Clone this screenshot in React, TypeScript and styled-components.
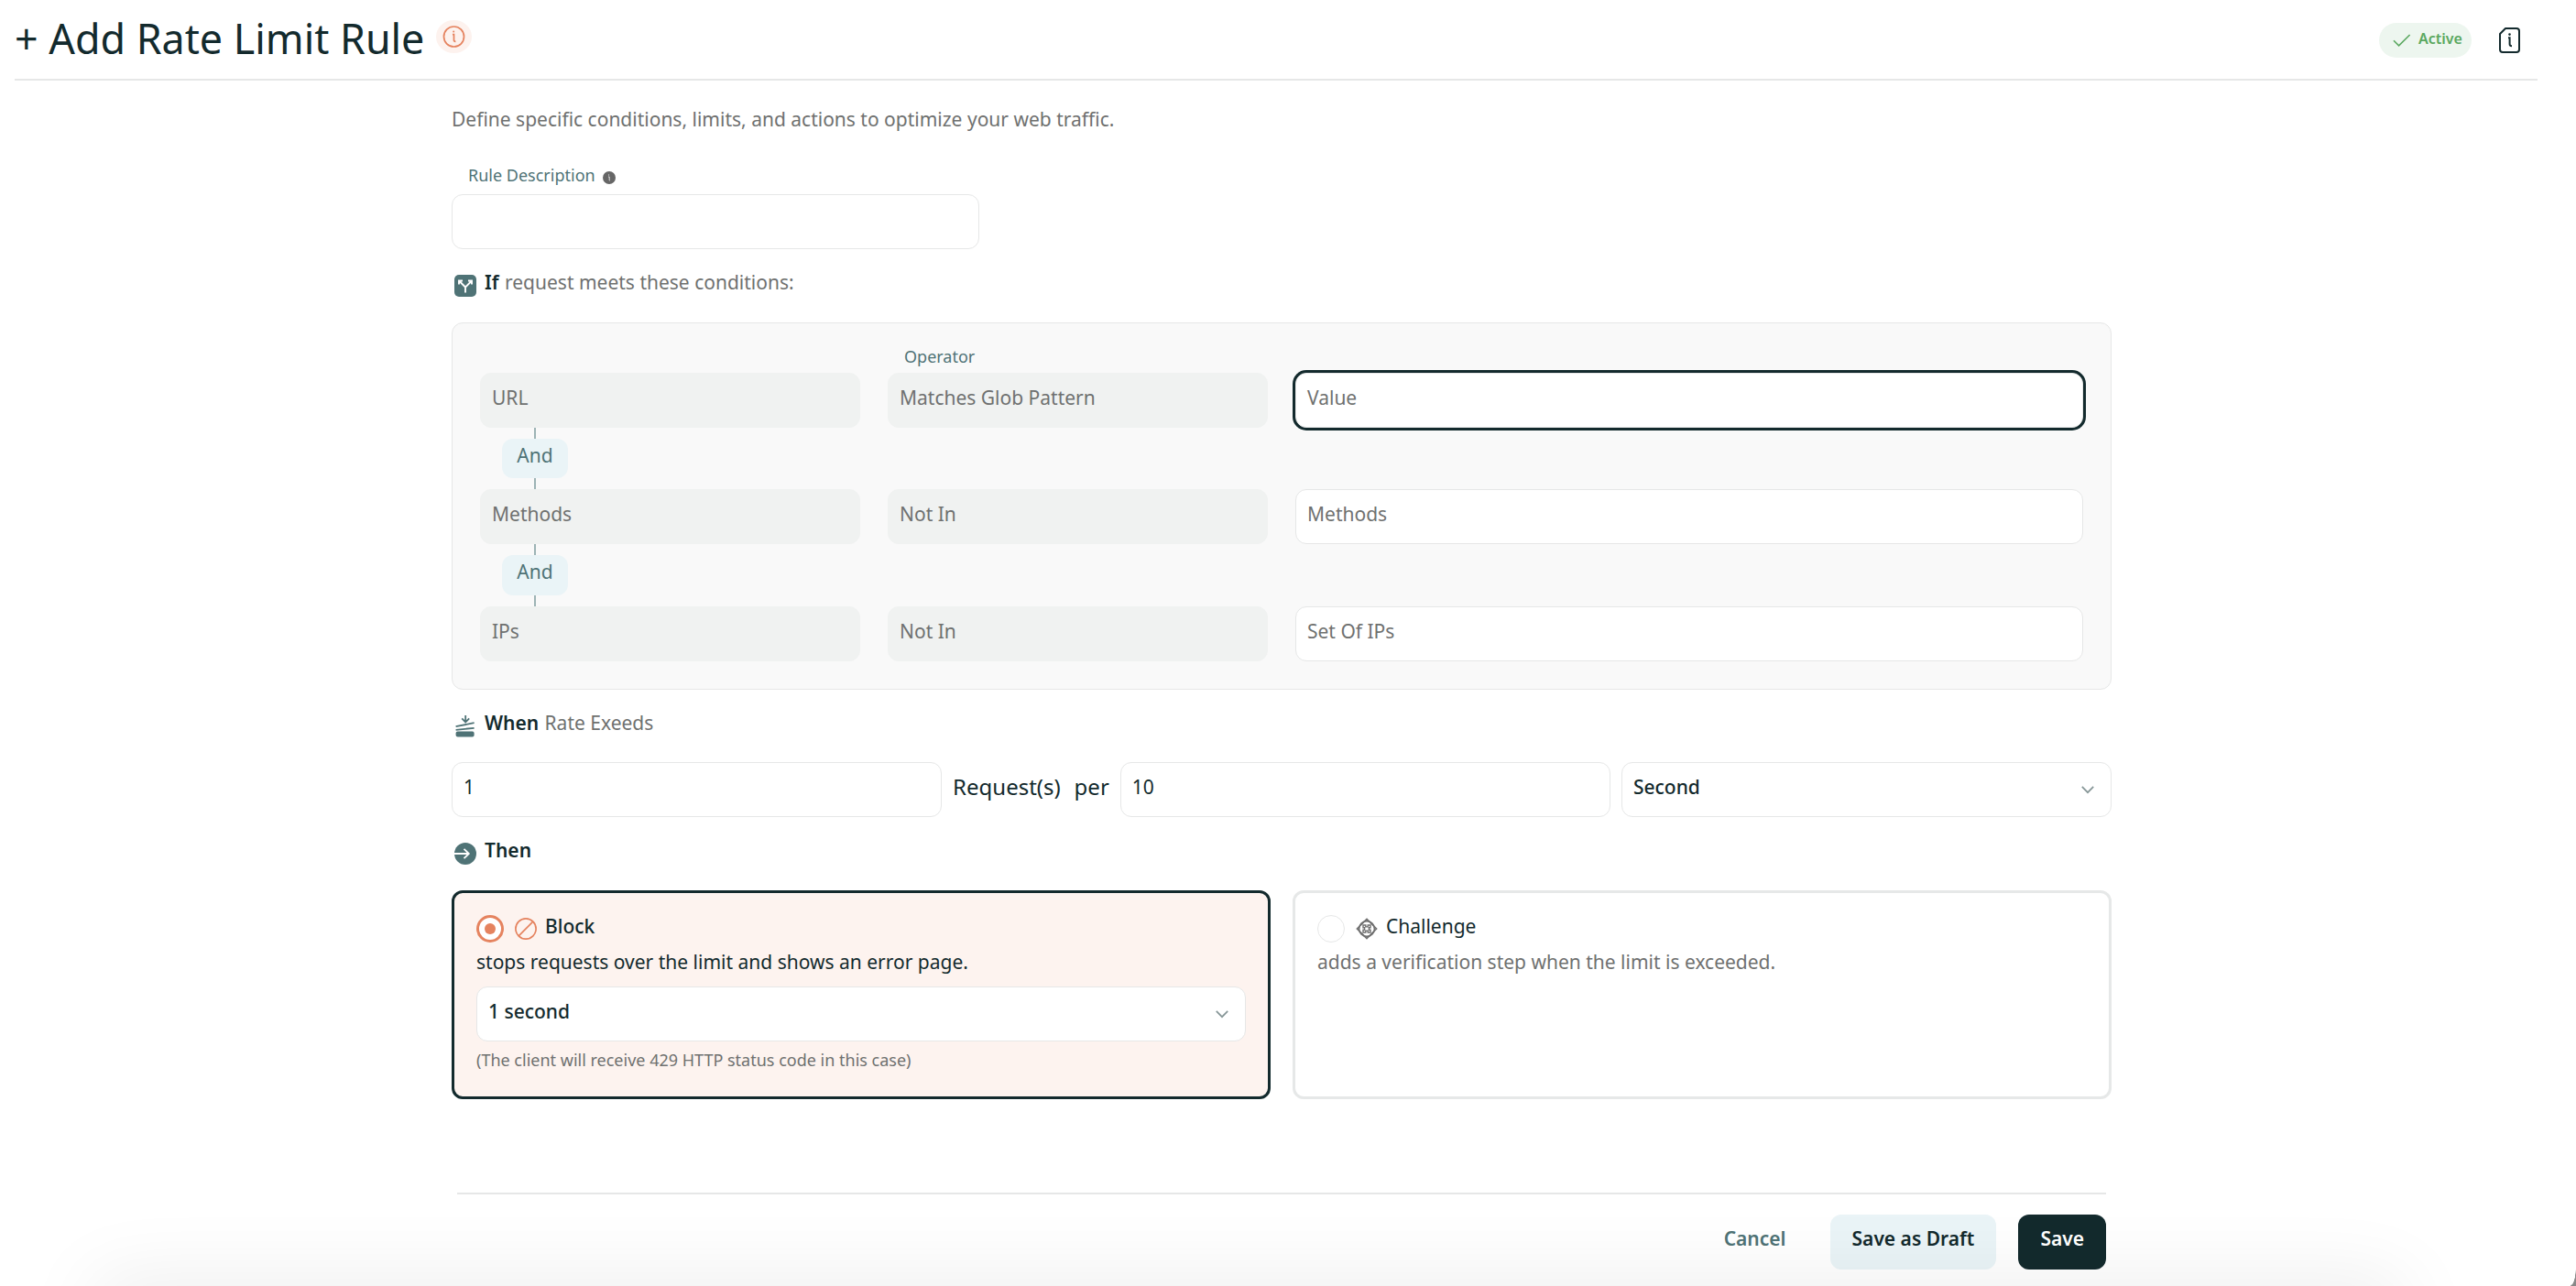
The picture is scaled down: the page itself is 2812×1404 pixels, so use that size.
import React from "react";
import styled, { createGlobalStyle, css } from "styled-components";

const dark = "#132a2d";
const teal = "#4f7376";
const grey = "#6f7170";
const line = "#e6e7e7";
const orange = "#e5835f";

const InfoGlyph: React.FC<{ color: string }> = ({ color }) => (
  <svg width="25" height="24" viewBox="0 0 25 24" fill="none" stroke={color} strokeWidth="1.7">
    <circle cx="12.5" cy="12" r="11" />
    <path d="M11 9.6h1.5v6.4c0 .9.5 1.3 1.9 1.3" />
    <circle cx="12.2" cy="6.4" r="1" fill={color} stroke="none" />
  </svg>
);

const CheckGlyph = () => (
  <svg width="20" height="16" viewBox="0 0 20 16" fill="none" stroke="#5aa860" strokeWidth="1.6">
    <path d="M1 8.2L6.6 13.8L18.6 2" />
  </svg>
);

const DocGlyph = () => (
  <svg width="24" height="30" viewBox="0 0 24 30" fill="none" stroke={dark} strokeWidth="2">
    <path d="M8 2H20a3 3 0 0 1 3 3V25a3 3 0 0 1-3 3H5a3 3 0 0 1-3-3V8z" strokeLinejoin="round" />
    <path d="M11 12.2h1.6v7c0 1.6.7 2 2.4 2" />
    <circle cx="12.5" cy="8.6" r="1.3" fill={dark} stroke="none" />
  </svg>
);

const HintGlyph = () => (
  <svg width="14" height="14" viewBox="0 0 14 14">
    <circle cx="7" cy="7" r="7" fill="#666" />
    <path d="M6 6h1.2v3.6q0 .6.8.6M6.6 3.4v1.2" fill="none" stroke="#ddd" strokeWidth="1" />
  </svg>
);

const SplitGlyph = () => (
  <svg width="24" height="24" viewBox="0 0 24 24">
    <rect width="24" height="24" rx="5" fill={teal} />
    <path
      d="M12 19.5V13.5L5.5 7M12 13.5L18.5 7M5 10.5V6.5H9M15 6.5H19V10.5"
      fill="none"
      stroke="#fff"
      strokeWidth="1.9"
    />
  </svg>
);

const RateGlyph = () => (
  <svg width="24" height="24" viewBox="0 0 24 24" fill="none" stroke={teal} strokeWidth="1.8">
    <path d="M12.2 0V7M8.2 3.4L12.2 7.4L16.2 3.4" />
    <path d="M1.6 12.2L21.6 8.2M1.6 15.8L21.6 13.8" />
    <rect x="1.6" y="17.6" width="20" height="6" rx="2" fill={teal} stroke="none" />
  </svg>
);

const ArrowGlyph = () => (
  <svg width="24" height="24" viewBox="0 0 24 24">
    <circle cx="12" cy="12" r="12" fill={teal} />
    <path d="M0 12H16M10.5 6.8L15.8 12L10.5 17.2" fill="none" stroke="#fff" strokeWidth="1.8" />
  </svg>
);

const BlockGlyph = () => (
  <svg width="24" height="24" viewBox="0 0 24 24" fill="none" stroke={orange} strokeWidth="1.7">
    <circle cx="12" cy="12" r="11.1" />
    <path d="M4.2 19.8L19.8 4.2" />
  </svg>
);

const ChallengeGlyph = () => (
  <svg width="24" height="24" viewBox="0 0 24 24" fill="none" stroke="#6f6f6f" strokeWidth="1.6">
    <path d="M12 1.4L22.6 12L12 22.6L1.4 12z" />
    <circle cx="12" cy="12" r="8.4" />
    <path d="M8 8h2.8v1.9h2.4V8H16v2.8h-1.6v2.4H16V16h-2.8v-1.9h-2.4V16H8v-2.8h1.6v-2.4H8z" strokeWidth="1.4" />
  </svg>
);

const Chevron = () => (
  <svg width="14" height="9" viewBox="0 0 14 9" fill="none" stroke="#869697" strokeWidth="1.7">
    <path d="M0.8 0.8L7 7.2L13.2 0.8" />
  </svg>
);

const conditions = [
  { name: "URL", operator: "Matches Glob Pattern", value: "Value", focused: true },
  { name: "Methods", operator: "Not In", value: "Methods", focused: false },
  { name: "IPs", operator: "Not In", value: "Set Of IPs", focused: false },
];

const App: React.FC = () => (
  <>
    <GlobalStyle />
    <Page>
      <Header>
        <Title>+ Add Rate Limit Rule</Title>
        <TitleInfo>
          <InfoGlyph color={orange} />
        </TitleInfo>
        <Status>
          <CheckGlyph />
          <span>Active</span>
        </Status>
        <DocGlyph />
      </Header>

      <Content>
        <Intro>Define specific conditions, limits, and actions to optimize your web traffic.</Intro>
        <DescriptionLabel>
          Rule Description
          <HintGlyph />
        </DescriptionLabel>
        <DescriptionField />

        <Heading>
          <SplitGlyph />
          <p>
            <b>If</b> request meets these conditions:
          </p>
        </Heading>
        <Panel>
          <OperatorLabel>Operator</OperatorLabel>
          {conditions.map((c, i) => (
            <React.Fragment key={c.name}>
              {i > 0 && (
                <Connector>
                  <Stem />
                  <AndTag>And</AndTag>
                  <Stem />
                </Connector>
              )}
              <ConditionRow>
                <Field $disabled>{c.name}</Field>
                <Field $disabled>{c.operator}</Field>
                <Field $span={2} $focused={c.focused}>
                  {c.value}
                </Field>
              </ConditionRow>
            </React.Fragment>
          ))}
        </Panel>

        <Heading $bottom={26}>
          <RateGlyph />
          <p>
            <b>When</b> Rate Exeeds
          </p>
        </Heading>
        <RateRow>
          <Field $filled>1</Field>
          <RateText>Request(s)&nbsp; per</RateText>
          <Field $filled>10</Field>
          <Field $filled $medium>
            Second
            <Chevron />
          </Field>
        </RateRow>

        <Heading>
          <ArrowGlyph />
          <p>
            <b>Then</b>
          </p>
        </Heading>
        <Cards>
          <Card $selected>
            <Option>
              <Radio $selected />
              <BlockGlyph />
              <OptionName $selected>Block</OptionName>
            </Option>
            <OptionText $selected>stops requests over the limit and shows an error page.</OptionText>
            <Field $filled $medium>
              1 second
              <Chevron />
            </Field>
            <Note>(The client will receive 429 HTTP status code in this case)</Note>
          </Card>
          <Card>
            <Option>
              <Radio />
              <ChallengeGlyph />
              <OptionName>Challenge</OptionName>
            </Option>
            <OptionText>adds a verification step when the limit is exceeded.</OptionText>
          </Card>
        </Cards>

        <Footer>
          <Button $kind="text">Cancel</Button>
          <Button $kind="light">Save as Draft</Button>
          <Button $kind="dark">Save</Button>
        </Footer>
      </Content>
      <BottomShade />
      <Corner />
    </Page>
  </>
);

export default App;

const GlobalStyle = createGlobalStyle`
  * {
    box-sizing: border-box;
  }
  body {
    margin: 0;
    background: #fff;
    overflow: hidden;
  }
  p {
    margin: 0;
  }
  svg {
    flex: none;
    display: block;
  }
`;

const Page = styled.div`
  position: relative;
  width: 2812px;
  height: 1404px;
  overflow: hidden;
  color: ${dark};
  font-family: "Noto Sans", sans-serif;
  font-size: 21px;
  line-height: 30px;
`;

const Header = styled.header`
  display: flex;
  align-items: center;
  height: 88px;
  margin: 0 42px 0 16px;
  padding: 2px 19px 0 0;
  border-bottom: 2px solid ${line};
`;

const Title = styled.h1`
  margin: 0;
  padding-bottom: 4px;
  font-size: 44.8px;
  font-weight: 400;
  line-height: 60px;
  white-space: nowrap;
`;

const TitleInfo = styled.span`
  display: flex;
  align-items: center;
  justify-content: center;
  width: 39px;
  height: 36px;
  margin: 0 auto 8px 13px;
  border-radius: 50%;
  background: #fdf2ee;
`;

const Status = styled.div`
  display: flex;
  align-items: center;
  gap: 8px;
  width: 101px;
  height: 38px;
  margin-right: 29px;
  padding-left: 15px;
  border-radius: 19px;
  background: #edf6ef;
  color: #5aa860;
  font-size: 16px;
  font-weight: 600;

  span {
    padding-bottom: 5px;
  }
`;

const Content = styled.main`
  display: flex;
  flex-direction: column;
  width: 1812px;
  margin-left: 493px;
`;

const Intro = styled.p`
  margin-top: 27px;
  color: ${grey};
`;

const DescriptionLabel = styled.label`
  display: flex;
  align-items: center;
  gap: 8px;
  height: 26px;
  margin: 33px 0 8px 18px;
  color: ${teal};
  font-size: 18px;

  svg {
    margin-top: 5px;
  }
`;

const Field = styled.div<{
  $disabled?: boolean;
  $focused?: boolean;
  $filled?: boolean;
  $medium?: boolean;
  $span?: number;
}>`
  display: flex;
  align-items: center;
  justify-content: space-between;
  flex: 1;
  height: 60px;
  min-height: 60px;
  padding: 0 18px 6px 12px;
  border: 1px solid ${(p) => (p.$disabled ? "#f0f2f1" : line)};
  border-radius: 12px;
  background: ${(p) => (p.$disabled ? "#f0f2f1" : "#fff")};
  color: ${(p) => (p.$filled ? dark : grey)};
  font-weight: ${(p) => (p.$medium ? 500 : 400)};
  ${(p) => p.$span && `grid-column: span ${p.$span};`}
  ${(p) =>
    p.$focused &&
    css`
      box-shadow: 0 0 0 3px ${dark};
    `}

  svg {
    margin-top: 6px;
  }
`;

const DescriptionField = styled(Field)`
  flex: none;
  width: 576px;
`;

const Heading = styled.div<{ $bottom?: number }>`
  display: flex;
  align-items: center;
  gap: 9px;
  height: 26px;
  margin: 27px 0 ${(p) => p.$bottom ?? 27}px 3px;
  color: ${grey};

  p {
    padding-bottom: 8px;
  }
  b {
    margin-right: 1px;
    color: ${dark};
    font-weight: 600;
  }
`;

const Panel = styled.section`
  height: 401px;
  padding: 24px 30px 0;
  border: 1px solid ${line};
  border-radius: 12px;
  background: #f9f9f9;
`;

const OperatorLabel = styled.div`
  height: 30px;
  padding-left: 463px;
  line-height: 24px;
  color: ${teal};
  font-size: 18px;
`;

const ConditionRow = styled.div`
  display: grid;
  grid-template-columns: repeat(4, 1fr);
  gap: 30px;
`;

const Connector = styled.div`
  display: flex;
  flex-direction: column;
  align-items: center;
  width: 72px;
  margin-left: 24px;
`;

const Stem = styled.span`
  width: 2px;
  height: 12px;
  background: #9db3b5;
`;

const AndTag = styled.span`
  width: 72px;
  height: 43.4px;
  border-radius: 12px;
  background: #eaf4f7;
  color: ${teal};
  line-height: 36px;
  text-align: center;
`;

const RateRow = styled.div`
  display: flex;
  align-items: center;
  gap: 12px;
`;

const RateText = styled.span`
  padding-bottom: 7px;
  font-size: 24px;
  word-spacing: 1.2px;
  white-space: nowrap;
`;

const Cards = styled.div`
  display: grid;
  grid-template-columns: 1fr 1fr;
  gap: 24px;
  height: 228px;
`;

const Card = styled.div<{ $selected?: boolean }>`
  padding: 24px;
  border: 3px solid ${(p) => (p.$selected ? dark : "#e6e8e8")};
  border-radius: 12px;
  background: ${(p) => (p.$selected ? "#fdf3ef" : "#fff")};
`;

const Option = styled.div`
  display: flex;
  align-items: center;
  height: 30px;

  svg {
    margin: 0 9px 0 12px;
  }
`;

const Radio = styled.span<{ $selected?: boolean }>`
  display: flex;
  align-items: center;
  justify-content: center;
  width: 30px;
  height: 30px;
  border: ${(p) => (p.$selected ? `3px solid ${orange}` : `1px solid ${line}`)};
  border-radius: 50%;
  background: #fff;

  &::after {
    content: "";
    width: 12px;
    height: 12px;
    border-radius: 50%;
    background: ${(p) => (p.$selected ? orange : "transparent")};
  }
`;

const OptionName = styled.span<{ $selected?: boolean }>`
  padding-bottom: 6px;
  font-weight: ${(p) => (p.$selected ? 500 : 400)};
`;

const OptionText = styled.p<{ $selected?: boolean }>`
  height: 48px;
  padding-top: 6px;
  color: ${(p) => (p.$selected ? dark : grey)};
`;

const Note = styled.p`
  margin-top: 5px;
  color: ${grey};
  font-size: 18px;
`;

const Footer = styled.footer`
  display: flex;
  justify-content: flex-end;
  gap: 24px;
  margin: 102px 6px 0;
  padding-top: 22px;
  border-top: 2px solid ${line};
`;

const Button = styled.button<{ $kind: "text" | "light" | "dark" }>`
  height: 60px;
  padding: 0 24px 8px;
  border: 0;
  border-radius: 12px;
  font: 600 21px "Noto Sans", sans-serif;
  background: ${(p) => ({ text: "transparent", light: "#eaf4f7", dark: dark })[p.$kind]};
  color: ${(p) => ({ text: teal, light: dark, dark: "#fff" })[p.$kind]};
`;

// soft shadow of the drawer that sits under the form
const BottomShade = styled.div`
  position: absolute;
  left: 110px;
  right: 195px;
  bottom: -60px;
  height: 60px;
  box-shadow: 0 0 85px 6px rgba(0, 0, 0, 0.08);
`;

const Corner = styled.div`
  position: absolute;
  right: 0;
  bottom: 0;
  width: 6px;
  height: 20px;
  background: radial-gradient(ellipse 6px 20px at 0 0, transparent 92%, #888 100%);
`;
